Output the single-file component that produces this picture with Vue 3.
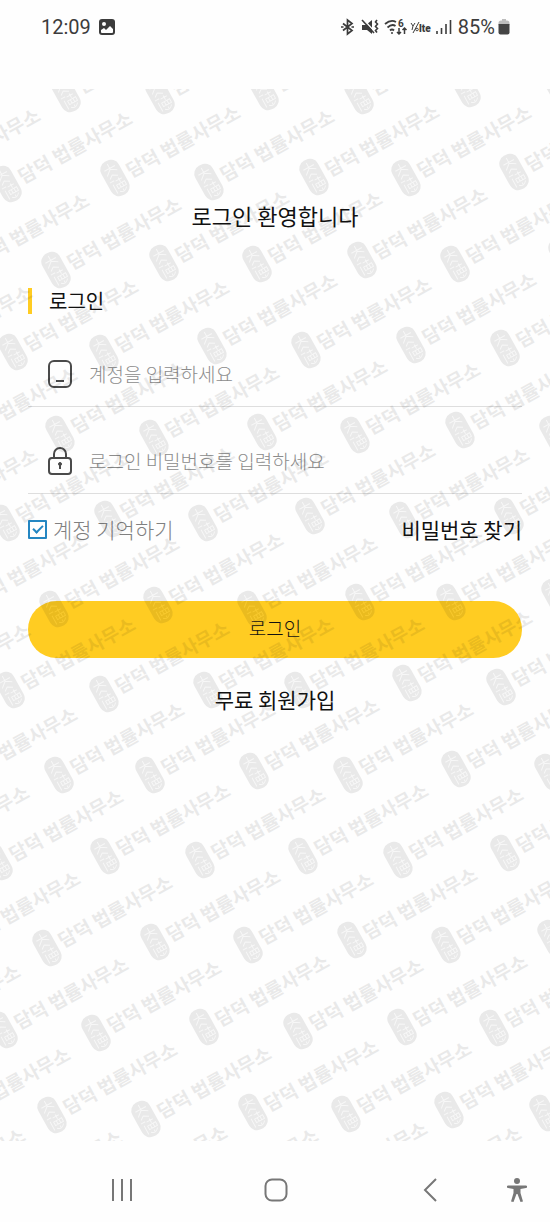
<script setup>
import { ref } from 'vue'

const account = ref('')
const password = ref('')
const remember = ref(true)

// centers of the repeated law office stamps, row by row
const marks = [
  [66, 94], [160, 96], [264, 92], [359, 96], [466, 89], [560, 92],
  [-85, 181], [7, 184], [115, 178], [209, 182], [314, 177], [406, 178], [514, 172],
  [-36, 266], [56, 270], [164, 263], [257, 264], [362, 260], [455, 264], [563, 256],
  [-93, 358], [13, 352], [104, 353], [212, 346], [306, 350], [411, 345], [505, 348],
  [-48, 440], [60, 434], [154, 438], [262, 432], [355, 435], [460, 430], [554, 434],
  [-88, 521], [5, 523], [109, 519], [203, 523], [310, 516], [404, 520], [509, 516],
  [-38, 606], [54, 609], [158, 605], [252, 609], [360, 602], [451, 602], [556, 597],
  [-95, 696], [10, 690], [104, 694], [208, 690], [299, 690], [407, 683], [501, 687],
  [-48, 780], [59, 775], [150, 775], [254, 771], [348, 775], [456, 769], [549, 772],
  [-96, 858], [-2, 862], [105, 856], [200, 860], [303, 856], [398, 860], [505, 853],
  [-45, 944], [47, 948], [155, 942], [248, 945], [352, 940], [446, 945], [552, 938],
  [-105, 1037], [3, 1030], [96, 1033], [204, 1027], [298, 1031], [402, 1027], [494, 1028],
  [-55, 1120], [52, 1115], [146, 1119], [253, 1112], [346, 1114], [449, 1110], [544, 1113],
  [-100, 1201], [-3, 1203], [102, 1198], [193, 1201], [302, 1194], [396, 1199], [500, 1195],
]
</script>

<template>
  <div class="screen">
    <header class="status">
      <div class="status__group">
        <span class="status__time">12:09</span>
        <svg class="status__picture" width="16" height="16" viewBox="0 0 16 16">
          <rect width="16" height="16" rx="3" fill="#3c3c3c" />
          <circle cx="5" cy="5" r="2" fill="#fff" />
          <path d="M2 11l3-2 2 2 4-4 3 3v3a1 1 0 0 1-1 1H3a1 1 0 0 1-1-1z" fill="#fff" />
        </svg>
      </div>
      <div class="status__group status__group--right">
        <svg class="status__icons" width="112" height="20" viewBox="0 0 112 20" fill="none" stroke="#3c3c3c" stroke-width="1.4">
          <path d="M3 6.500l9 7-4.500 3.500V3l4.500 3.500-9 7M1 10h2.500M11.500 10H14" stroke-width="1.700" />
          <path d="M22 8h4l6-5v14l-5-4h-5z" fill="#3c3c3c" stroke="none" />
          <path d="M23 2l12 13" stroke="#fefefe" stroke-width="1.5" />
          <path d="M22 3l12 13" stroke-width="1.6" />
          <path d="M37 3l-1.500 2 2 2-2 2.500 2 2-2 2 1.500 2" stroke-width="1.600" />
          <path d="M45 7q6-5 11-2M47.500 10.500q4.500-4 8-1.500M50 13.500q2-2 4 0" stroke-width="1.8" />
          <circle cx="52" cy="16" r="1" fill="#3c3c3c" stroke="none" />
          <text class="status__six" x="58" y="10">6</text>
          <path d="M59 11v6M57 15l2 2 2-2M64.500 17v-6M62.500 13l2-2 2 2" stroke-width="1.5" />
          <path d="M71 6l2 3 2-3M73 9l-1 4M79 5l-6 11" stroke-width="1" />
          <circle cx="77" cy="12.500" r="1.300" stroke-width="0.9" />
          <text class="status__lte" x="79" y="15">lte</text>
          <path d="M97 17v-3M101.500 17v-6M106 17V7M110.500 17V3" stroke-width="1.6" />
        </svg>
        <span class="status__battery">85%</span>
        <svg width="12" height="16" viewBox="0 0 12 16">
          <path d="M3 1.500h1V0h4v1.500h1a2.500 2.500 0 0 1 2.500 2.500v2h-11V4A2.500 2.500 0 0 1 3 1.500z" fill="#bdbdbd" />
          <path d="M.5 5h11v8.500a2 2 0 0 1-2 2h-7a2 2 0 0 1-2-2z" fill="#444" />
        </svg>
      </div>
    </header>

    <main class="login">
      <h1 class="login__title">로그인 환영합니다</h1>
      <h2 class="login__subtitle">로그인</h2>

      <form class="login__form" @submit.prevent>
        <label class="field">
          <svg width="26" height="30" viewBox="0 0 26 30" fill="none" stroke="#4a4a4a" stroke-width="2">
            <rect x="2" y="2" width="22" height="26" rx="5" />
            <path d="M9 22h8" />
          </svg>
          <input v-model="account" class="field__input" type="text" placeholder="계정을 입력하세요" />
        </label>
        <label class="field">
          <svg width="26" height="30" viewBox="0 0 26 30" fill="none" stroke="#4a4a4a" stroke-width="2">
            <rect x="2" y="12" width="22" height="16" rx="3" />
            <path d="M7 12V8a6 6 0 0 1 12 0v4M13 18v5" />
            <circle cx="13" cy="18" r="1.500" fill="#4a4a4a" stroke-width="1" />
          </svg>
          <input v-model="password" class="field__input" type="password" placeholder="로그인 비밀번호를 입력하세요" />
        </label>

        <div class="login__options">
          <label class="remember">
            <input v-model="remember" class="remember__box" type="checkbox" />
            <span>계정 기억하기</span>
          </label>
          <a class="login__link" href="#">비밀번호 찾기</a>
        </div>

        <button class="login__submit" type="submit">로그인</button>
      </form>

      <a class="login__link login__link--join" href="#">무료 회원가입</a>

      <svg class="watermark" aria-hidden="true">
        <defs>
          <g id="stamp">
            <rect x="-10" y="-19" width="20" height="38" rx="9" />
            <path
              class="watermark__seal"
              d="M0-16v6l-6 5M0-10l6 4M-6-11h12M-5-1l4-3 5 3M-7 2h5M-5 5v10M-1 3h7M3 1v5M-2 7h9v4h-9zM1 7v4M4 7v4M-2 14q4 4 8-1M2 13v2"
            />
            <text class="watermark__text" x="14" y="8">담덕 법률사무소</text>
          </g>
        </defs>
        <g transform="translate(0 -89)">
          <use
            v-for="(mark, i) in marks"
            :key="i"
            href="#stamp"
            :transform="`translate(${mark[0]} ${mark[1]}) rotate(-29)`"
          />
        </g>
      </svg>
    </main>

    <nav class="navbar">
      <button class="navbar__button" type="button" aria-label="최근 앱">
        <svg width="22" height="24" viewBox="0 0 22 24" fill="none" stroke="#777" stroke-width="2">
          <path d="M2 1v22M11 1v22M20 1v22" />
        </svg>
      </button>
      <button class="navbar__button" type="button" aria-label="홈">
        <svg width="24" height="24" viewBox="0 0 24 24" fill="none" stroke="#777" stroke-width="2">
          <rect x="1.500" y="1.500" width="21" height="21" rx="6.500" />
        </svg>
      </button>
      <button class="navbar__button" type="button" aria-label="뒤로">
        <svg width="14" height="24" viewBox="0 0 14 24" fill="none" stroke="#777" stroke-width="2">
          <path d="M13 1L2 12l11 11" />
        </svg>
      </button>
      <button class="navbar__button navbar__button--access" type="button" aria-label="접근성">
        <svg width="20" height="26" viewBox="0 0 20 26" fill="#777">
          <circle cx="10" cy="4" r="3" />
          <path d="M1 8.500h18a1 1 0 0 1 0 2.500l-5.500 1v4l2.500 8.500-2.500.5-3-8h-1l-3 8-2.500-.5L6.500 16v-4L1 11a1 1 0 0 1 0-2.500z" />
        </svg>
      </button>
    </nav>
  </div>
</template>

<style>
body {
  margin: 0;
  background: #fefefe;
}
</style>

<style scoped>
.screen {
  min-height: 100vh;
  display: flex;
  flex-direction: column;
  background: #fefefe;
  color: #111;
  font-family: "Noto Sans CJK KR", sans-serif;
}

.status {
  display: flex;
  justify-content: space-between;
  align-items: center;
  height: 24px;
  padding: 15px 40px 50px 41px;
  font-family: Roboto, sans-serif;
  font-size: 20px;
  line-height: 24px;
  color: #3c3c3c;
}

.status__group {
  display: flex;
  align-items: center;
  gap: 8px;
}

.status__group--right {
  gap: 3px;
}

.status__icons {
  margin-right: 3px;
}

.status__six {
  font-size: 10px;
  font-weight: 700;
  fill: #3c3c3c;
  stroke: none;
}

.status__lte {
  font-size: 10px;
  font-weight: 900;
  fill: #3c3c3c;
  stroke: none;
}

.login {
  position: relative;
  flex: 1;
  display: flex;
  flex-direction: column;
  padding: 111px 28px 0;
}

.login__title {
  margin: 0;
  font-size: 22px;
  font-weight: 400;
  line-height: 30px;
  text-align: center;
}

.login__subtitle {
  margin: 58px 0 28px;
  padding-left: 17px;
  border-left: 4px solid #ffcc22;
  font-size: 20px;
  font-weight: 400;
  line-height: 26px;
}

.login__form {
  display: flex;
  flex-direction: column;
}

.field {
  display: flex;
  align-items: center;
  gap: 16px;
  height: 64px;
  margin-bottom: 22px;
  padding-left: 19px;
  border-bottom: 1px solid #dedede;
}

.field__input {
  flex: 1;
  min-width: 0;
  padding: 0;
  border: none;
  outline: none;
  background: transparent;
  font-family: inherit;
  font-size: 19px;
  font-weight: 300;
  line-height: 28px;
  color: #111;
}

.field__input::placeholder {
  color: #8c8c8c;
  opacity: 1;
}

.login__options {
  display: flex;
  justify-content: space-between;
  align-items: center;
  height: 30px;
  margin-top: -2px;
}

.remember {
  display: flex;
  align-items: center;
  gap: 6px;
  font-size: 21px;
  font-weight: 300;
  line-height: 30px;
  color: #808080;
}

.remember__box {
  appearance: none;
  display: grid;
  place-items: center;
  width: 19px;
  height: 19px;
  margin: 0;
  border: 2px solid #2486c2;
  border-radius: 1px;
}

.remember__box:checked::after {
  content: "";
  width: 8px;
  height: 4px;
  margin-bottom: 3px;
  border-left: 2px solid #2486c2;
  border-bottom: 2px solid #2486c2;
  transform: rotate(-45deg);
}

.login__link {
  font-size: 21px;
  line-height: 30px;
  color: #111;
  text-decoration: none;
}

.login__link--join {
  align-self: center;
  margin-top: 26px;
}

.login__submit {
  height: 57px;
  margin-top: 57px;
  padding: 0 0 4px;
  border: none;
  border-radius: 29px;
  background: #ffcc22;
  color: #111;
  font-family: inherit;
  font-size: 19px;
  font-weight: 300;
  cursor: pointer;
}

.watermark {
  position: absolute;
  inset: 0;
  width: 100%;
  height: 100%;
  overflow: hidden;
  opacity: 0.08;
  pointer-events: none;
}

.watermark__seal {
  fill: none;
  stroke: #aaa;
  stroke-width: 1;
}

.watermark__text {
  font-size: 19px;
  font-weight: 700;
}

.navbar {
  display: grid;
  grid-template-columns: 45fr 154fr 154fr 154fr 43fr;
  align-items: center;
  height: 65px;
  padding-top: 16px;
}

.navbar__button {
  display: flex;
  justify-content: center;
  padding: 8px 0;
  border: none;
  background: none;
  cursor: pointer;
}

.navbar__button:first-child {
  grid-column: 2;
}

.navbar__button--access {
  justify-self: start;
}
</style>
